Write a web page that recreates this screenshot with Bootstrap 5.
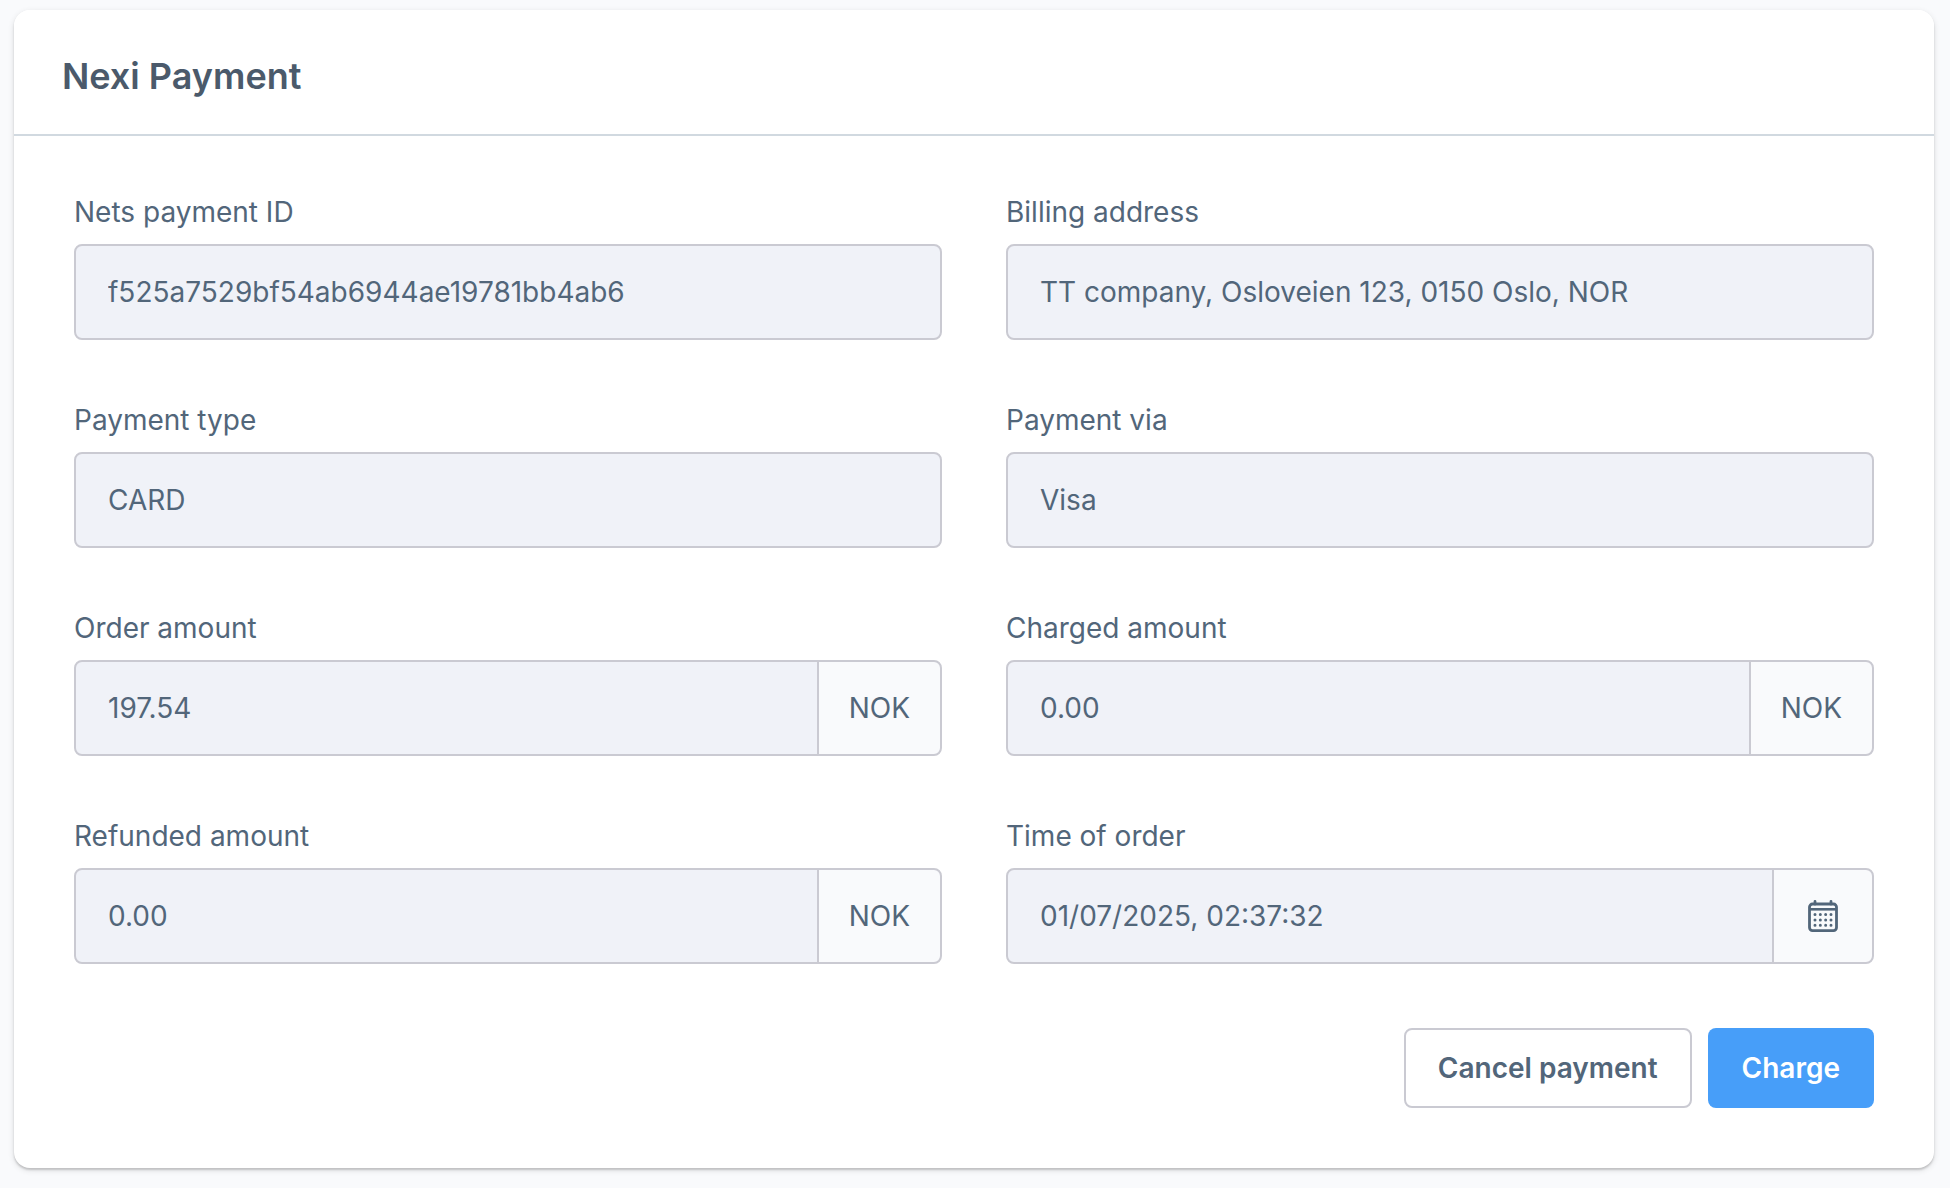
<!DOCTYPE html>
<html lang="en">
<head>
<meta charset="utf-8">
<meta name="viewport" content="width=device-width, initial-scale=1">
<title>Nexi Payment</title>
<link href="https://cdn.jsdelivr.net/npm/bootstrap@5.3.0/dist/css/bootstrap.min.css" rel="stylesheet">
<style>
  :root { --ink: #52667a; --line: #cacad2; --field: #f0f2f8; --surface: #f9fafc; }
  body { font-family: Inter, "Open Sans", sans-serif; font-size: 28px; line-height: 32px; color: var(--ink); background: var(--surface); padding: 10px 16px 16px 14px; }
  .payment-card { --bs-card-border-width: 0; --bs-card-border-radius: 16px; --bs-card-inner-border-radius: 16px; --bs-card-bg: #fff; color: var(--ink);
    box-shadow: 0 2px 2px rgba(0,0,0,.16), 0 2px 6px rgba(0,0,0,.12); }
  .payment-head { background: #fff; border-bottom: 2px solid #d1d9e0; padding: 44px 48px 36px; }
  .payment-title { font-size: 36px; line-height: 44px; font-weight: 600; color: #4b5a6b; }
  .payment-body { padding: 60px; }
  .payment-fields { --bs-gutter-x: 64px; --bs-gutter-y: 64px; }
  .form-label { margin-bottom: 16px; display: block; line-height: 32px; }
  .form-control, .input-group-text { height: 96px; border: 2px solid var(--line); border-radius: 8px; font-size: 28px; line-height: 32px; color: var(--ink); padding: 0 32px; }
  .form-control:disabled { background: var(--field); color: var(--ink); opacity: 1; -webkit-text-fill-color: var(--ink); }
  .input-group-text { background: var(--surface); padding: 0 30px; }
  .input-group > .input-group-text { margin-left: -2px !important; }
  .date-addon { padding: 0 32px; }
  .btn { height: 80px; padding: 0 32px; border: 2px solid var(--line); border-radius: 8px; font-size: 28px; line-height: 32px; font-weight: 600; }
  .btn-cancel { --bs-btn-color: var(--ink); --bs-btn-bg: #fff; --bs-btn-hover-bg: #f0f2f8; --bs-btn-hover-color: var(--ink); }
  .btn-charge { --bs-btn-color: #fff; --bs-btn-bg: #479ef9; --bs-btn-hover-bg: #188eee; --bs-btn-hover-color: #fff; border-color: transparent; }
  .payment-actions { margin-top: 64px; }
</style>
<script src="https://cdn.jsdelivr.net/npm/bootstrap@5.3.0/dist/js/bootstrap.bundle.min.js"></script>
</head>
<body>
<main class="card payment-card">
  <header class="card-header payment-head">
    <h1 class="payment-title mb-0">Nexi Payment</h1>
  </header>
  <form class="card-body payment-body">
    <div class="row row-cols-1 row-cols-md-2 payment-fields">
      <div class="col">
        <label class="form-label" for="paymentId">Nets payment ID</label>
        <input class="form-control" id="paymentId" type="text" value="f525a7529bf54ab6944ae19781bb4ab6" disabled>
      </div>
      <div class="col">
        <label class="form-label" for="billing">Billing address</label>
        <input class="form-control" id="billing" type="text" value="TT company, Osloveien 123, 0150 Oslo, NOR" disabled>
      </div>
      <div class="col">
        <label class="form-label" for="ptype">Payment type</label>
        <input class="form-control" id="ptype" type="text" value="CARD" disabled>
      </div>
      <div class="col">
        <label class="form-label" for="via">Payment via</label>
        <input class="form-control" id="via" type="text" value="Visa" disabled>
      </div>
      <div class="col">
        <label class="form-label" for="orderAmount">Order amount</label>
        <div class="input-group">
          <input class="form-control" id="orderAmount" type="text" value="197.54" disabled>
          <span class="input-group-text">NOK</span>
        </div>
      </div>
      <div class="col">
        <label class="form-label" for="charged">Charged amount</label>
        <div class="input-group">
          <input class="form-control" id="charged" type="text" value="0.00" disabled>
          <span class="input-group-text">NOK</span>
        </div>
      </div>
      <div class="col">
        <label class="form-label" for="refunded">Refunded amount</label>
        <div class="input-group">
          <input class="form-control" id="refunded" type="text" value="0.00" disabled>
          <span class="input-group-text">NOK</span>
        </div>
      </div>
      <div class="col">
        <label class="form-label" for="orderTime">Time of order</label>
        <div class="input-group">
          <input class="form-control" id="orderTime" type="text" value="01/07/2025, 02:37:32" disabled>
          <span class="input-group-text date-addon">
            <svg width="34" height="32" viewBox="0 0 34 32" fill="none" stroke="#52667a" aria-hidden="true">
              <rect x="3.5" y="4" width="27" height="26.6" rx="3" stroke-width="2.8"/>
              <path d="M3.5 9.3H30.5" stroke-width="2.6"/>
              <path d="M9 4V1.4M25 4V1.4" stroke-width="2.8" stroke-linecap="round"/>
              <path d="M9 14.6H25.2M9 20H25.2M9 25.3H25.2" stroke-width="3" stroke-linecap="round" stroke-dasharray="0 5.33"/>
            </svg>
          </span>
        </div>
      </div>
    </div>
    <div class="d-flex flex-wrap justify-content-end gap-3 payment-actions">
      <button type="button" class="btn btn-cancel">Cancel payment</button>
      <button type="button" class="btn btn-charge">Charge</button>
    </div>
  </form>
</main>
</body>
</html>
